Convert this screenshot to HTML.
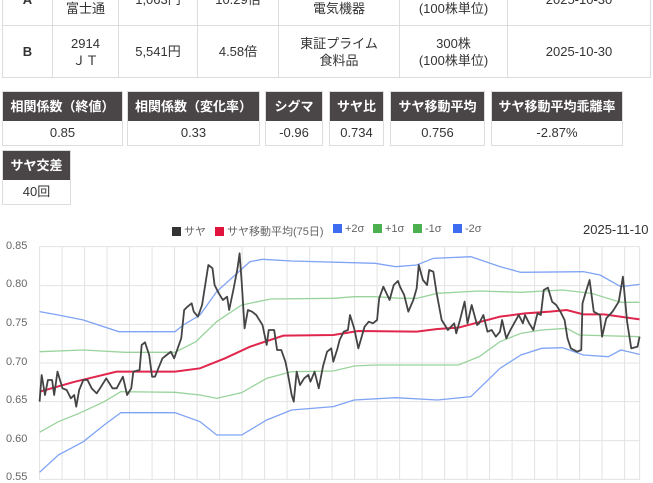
<!DOCTYPE html>
<html><head><meta charset="utf-8"><style>
*{margin:0;padding:0;box-sizing:border-box}
body{width:653px;height:480px;overflow:hidden;background:#fff;font-family:"Liberation Sans","Noto Sans CJK JP",sans-serif;color:#333;font-size:13px;position:relative}
table{position:absolute;left:2px;top:-27px;border-collapse:collapse;width:649px}
td{border:1px solid #ddd;text-align:center;height:52px;line-height:17px;font-size:13px}
.box{position:absolute;border:1px solid #ddd;text-align:center}
.box .h{background:#4a4546;color:#fff;font-weight:bold;height:29px;line-height:29px;font-size:13px}
.box .v{height:24px;line-height:24px}
.lg{position:absolute;top:223px;font-size:11px;color:#666;white-space:nowrap}
.sq{display:inline-block;width:9px;height:9px;vertical-align:-1px;margin-right:3px}
.yl{position:absolute;left:6px;font-size:11px;color:#666}
</style></head><body>
<table>
<tr><td style="width:50px;font-weight:bold">A</td><td style="width:66px">6702<br>富士通</td><td style="width:79px">1,063円</td><td style="width:81px">10.29倍</td><td style="width:121px">東証プライム<br>電気機器</td><td style="width:108px">100株<br>(100株単位)</td><td>2025-10-30</td></tr>
<tr><td style="font-weight:bold">B</td><td>2914<br>ＪＴ</td><td>5,541円</td><td>4.58倍</td><td>東証プライム<br>食料品</td><td>300株<br>(100株単位)</td><td>2025-10-30</td></tr>
</table>
<div class="box" style="left:2px;top:91px;width:121px"><div class="h">相関係数（終値）</div><div class="v">0.85</div></div>
<div class="box" style="left:127px;top:91px;width:133px"><div class="h">相関係数（変化率）</div><div class="v">0.33</div></div>
<div class="box" style="left:265px;top:91px;width:58px"><div class="h">シグマ</div><div class="v">-0.96</div></div>
<div class="box" style="left:329px;top:91px;width:55px"><div class="h">サヤ比</div><div class="v">0.734</div></div>
<div class="box" style="left:390px;top:91px;width:95px"><div class="h">サヤ移動平均</div><div class="v">0.756</div></div>
<div class="box" style="left:491px;top:91px;width:132px"><div class="h">サヤ移動平均乖離率</div><div class="v">-2.87%</div></div>
<div class="box" style="left:2px;top:150px;width:69px"><div class="h">サヤ交差</div><div class="v">40回</div></div>

<div class="lg" style="left:172px"><span class="sq" style="background:#333"></span>サヤ</div>
<div class="lg" style="left:215px"><span class="sq" style="background:#e0143c"></span>サヤ移動平均(75日)</div>
<div class="lg" style="left:333px"><span class="sq" style="background:#3d6cf0"></span>+2σ</div>
<div class="lg" style="left:373px"><span class="sq" style="background:#4caf50"></span>+1σ</div>
<div class="lg" style="left:413px"><span class="sq" style="background:#4caf50"></span>-1σ</div>
<div class="lg" style="left:453px"><span class="sq" style="background:#3d6cf0"></span>-2σ</div>
<div style="position:absolute;left:583px;top:222px;font-size:13px;color:#333">2025-11-10</div>
<div class="yl" style="top:240px">0.85</div>
<div class="yl" style="top:278px">0.80</div>
<div class="yl" style="top:317px">0.75</div>
<div class="yl" style="top:356px">0.70</div>
<div class="yl" style="top:394px">0.65</div>
<div class="yl" style="top:433px">0.60</div>
<div class="yl" style="top:471px">0.55</div>
<svg width="653" height="480" style="position:absolute;left:0;top:0">
<g transform="translate(0,215) scale(0.41667,0.33333)" fill="none">
<g stroke="#e3e3e3" stroke-width="1">
<path vector-effect="non-scaling-stroke" d="M95,95H1535M95,212H1535M95,328H1535M95,444H1535M95,560H1535M95,677H1535M95,793H1535"/>
<path vector-effect="non-scaling-stroke" d="M95,95V795M149,95V795M203,95V795M257,95V795M311,95V795M365,95V795M419,95V795M473,95V795M527,95V795M581,95V795M635,95V795M689,95V795M743,95V795M797,95V795M851,95V795M905,95V795M959,95V795M1013,95V795M1067,95V795M1121,95V795M1175,95V795M1229,95V795M1283,95V795M1337,95V795M1391,95V795M1445,95V795M1499,95V795M1535,95V795"/>
</g>
<polyline vector-effect="non-scaling-stroke" stroke="#7fa3f5" stroke-width="1.3" points="95,290 140,300 200,315 285,350 420,350 440,330 480,300 520,230 560,185 600,140 630,133 700,138 900,145 950,155 1000,150 1040,130 1130,125 1200,155 1250,172 1400,170 1440,180 1490,215 1535,208"/>
<polyline vector-effect="non-scaling-stroke" stroke="#99d39b" stroke-width="1.3" points="95,410 200,405 300,412 420,412 470,380 520,320 580,270 650,252 800,250 850,245 900,245 960,250 1000,250 1050,235 1150,228 1250,232 1350,225 1420,235 1490,262 1535,262"/>
<polyline vector-effect="non-scaling-stroke" stroke="#e0264c" stroke-width="2" points="95,530 180,500 280,470 420,470 480,460 540,430 600,395 680,362 800,360 860,348 1000,350 1050,342 1100,338 1200,305 1260,295 1320,290 1360,285 1400,298 1450,298 1535,313"/>
<polyline vector-effect="non-scaling-stroke" stroke="#99d39b" stroke-width="1.3" points="95,652 140,620 190,595 250,560 290,530 420,532 480,540 520,550 580,533 640,490 700,470 800,468 850,453 900,450 1100,450 1150,425 1200,380 1250,355 1300,345 1360,340 1390,360 1535,365"/>
<polyline vector-effect="non-scaling-stroke" stroke="#7fa3f5" stroke-width="1.3" points="95,772 140,720 200,680 250,630 290,593 420,593 480,620 520,660 580,660 640,615 700,585 800,575 850,555 950,548 1050,555 1130,545 1200,460 1250,420 1300,400 1350,398 1400,420 1460,425 1490,405 1535,418"/>
<polyline vector-effect="non-scaling-stroke" stroke="#444" stroke-width="1.8" stroke-linejoin="round" points="95,560 100,480 108,540 115,495 125,495 130,540 138,470 150,520 160,525 170,550 178,540 183,575 190,525 200,495 210,495 220,520 232,535 240,520 255,490 270,520 280,520 295,485 305,540 315,520 320,470 335,465 340,390 348,382 358,420 365,485 372,485 380,460 390,430 400,420 410,410 418,430 425,405 435,370 442,285 450,275 460,265 465,290 475,305 485,270 495,190 500,150 510,160 515,210 525,235 535,255 545,245 550,285 560,225 570,160 575,115 580,200 587,340 595,285 605,290 615,300 625,320 630,330 640,390 645,345 658,345 665,405 675,405 685,440 690,470 700,540 705,560 712,470 720,510 730,490 740,480 745,500 755,470 765,520 775,455 785,410 795,400 800,440 810,400 815,375 825,350 835,345 840,300 850,340 860,400 875,335 885,320 895,325 905,315 910,250 920,215 935,255 945,210 955,198 960,215 970,240 980,290 992,255 1000,220 1005,150 1015,195 1025,210 1030,165 1040,170 1048,235 1060,315 1075,345 1090,325 1095,355 1105,310 1115,260 1122,325 1132,270 1145,330 1150,325 1160,300 1170,350 1180,345 1190,365 1200,350 1205,315 1215,370 1225,345 1245,300 1255,325 1260,300 1270,325 1280,345 1290,295 1298,300 1305,225 1315,218 1325,260 1335,270 1345,290 1355,315 1362,370 1370,400 1385,410 1395,405 1398,265 1405,235 1415,195 1425,290 1440,300 1445,365 1455,310 1470,290 1485,260 1495,185 1505,320 1515,400 1530,395 1535,365"/>
</g>
</svg>
</body></html>
